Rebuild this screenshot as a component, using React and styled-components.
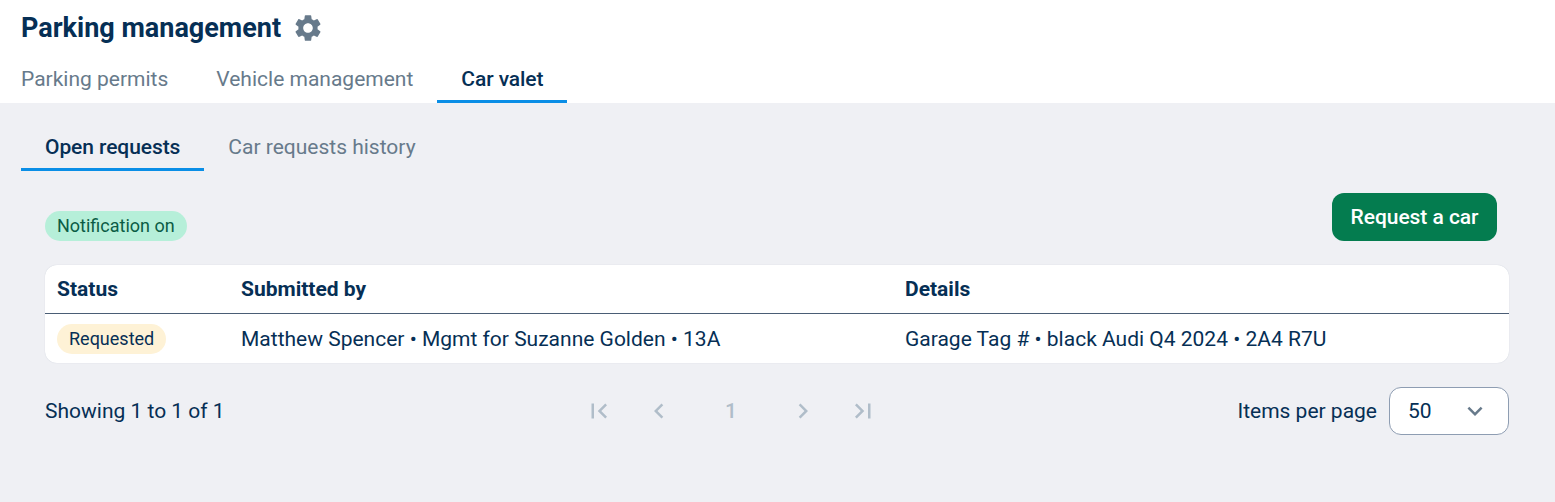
import React from "react";
import styled, { createGlobalStyle } from "styled-components";
import {
  MdSettings,
  MdFirstPage,
  MdLastPage,
  MdChevronLeft,
  MdChevronRight,
  MdExpandMore
} from "react-icons/md";

const navy = "#062f55";
const muted = "#677a8b";
const blue = "#0a8ee6";
const disabled = "#b0bdc9";

const GlobalStyle = createGlobalStyle`
  html, body {
    margin: 0;
    padding: 0;
    height: 100%;
  }
  body {
    font-family: Roboto, "Liberation Sans", sans-serif;
    color: ${navy};
    background: #eff0f4;
  }
  #root {
    height: 100%;
  }
`;

const Page = styled.div`
  display: flex;
  flex-direction: column;
  height: 100%;
  overflow: hidden;
`;

const Header = styled.header`
  background: #fff;
  height: 103px;
  padding-left: 21px;
  display: flex;
  flex-direction: column;
`;

const TitleRow = styled.div`
  height: 56px;
  display: flex;
  align-items: center;
  gap: 11px;
`;

const Title = styled.h1`
  margin: 0;
  font-size: 27px;
  font-weight: 700;
  line-height: 32px;
  color: ${navy};
`;

const SettingsButton = styled.span`
  display: flex;
  color: ${muted};
`;

const Tabs = styled.nav`
  display: flex;
  height: ${({ $height }) => $height}px;
`;

// First top level tab has no left padding, sub tabs keep it
const Tab = styled.div`
  display: flex;
  align-items: center;
  height: 100%;
  box-sizing: border-box;
  padding: ${({ $drop }) => $drop || 0}px 24px 0;
  padding-left: ${({ $flush }) => ($flush ? 0 : "24px")};
  font-size: 21px;
  font-weight: ${({ $active }) => ($active ? 500 : 400)};
  letter-spacing: ${({ $active }) => ($active ? "-0.08px" : 0)};
  color: ${({ $active }) => ($active ? navy : muted)};
  border-bottom: 3px solid ${({ $active }) => ($active ? blue : "transparent")};
`;

const Content = styled.main`
  flex: 1;
  padding: 18px 46px 0 21px;
`;

const Panel = styled.section`
  padding-left: 24px;
`;

const ActionRow = styled.div`
  display: flex;
  justify-content: space-between;
  align-items: flex-end;
  margin-top: 22px;
  padding-right: 12px;
`;

const Pill = styled.span`
  display: inline-flex;
  align-items: center;
  box-sizing: border-box;
  height: 30px;
  padding: 0 12px ${({ $tone }) => ($tone === "green" ? 2 : 0)}px;
  border-radius: 15px;
  font-size: 18px;
  background: ${({ $tone }) => ($tone === "green" ? "#b6efd9" : "#fef2d6")};
  color: ${({ $tone }) => ($tone === "green" ? "#0b5c45" : navy)};
`;

const PrimaryButton = styled.button`
  height: 48px;
  width: 165px;
  padding: 0;
  border: 0;
  border-radius: 12px;
  background: #047c4f;
  color: #fff;
  font-family: inherit;
  font-size: 21px;
  font-weight: 500;
  letter-spacing: -0.05px;
`;

const Table = styled.div`
  margin-top: 24px;
  background: #fff;
  border-radius: 12px;
  overflow: hidden;
  box-shadow: 0 0 1px rgba(11, 45, 78, 0.2);
`;

const Row = styled.div`
  display: grid;
  grid-template-columns: 184px 664px 1fr;
  align-items: center;
  height: ${({ $head }) => ($head ? 48 : 49)}px;
  font-size: 21px;
  font-weight: ${({ $head }) => ($head ? 700 : 400)};
  border-bottom: ${({ $head }) => ($head ? "1px solid #4a5d75" : "0")};
`;

const Cell = styled.div`
  padding-left: 12px;
`;

const Footer = styled.div`
  display: flex;
  justify-content: space-between;
  align-items: center;
  margin-top: 24px;
  font-size: 21px;
`;

const Pager = styled.div`
  display: flex;
  align-items: center;
  color: ${disabled};
`;

const PagerButton = styled.span`
  display: flex;
  align-items: center;
  justify-content: center;
  width: ${({ $wide }) => ($wide ? 84 : 60)}px;
  font-weight: 500;
`;

const PerPage = styled.div`
  display: flex;
  align-items: center;
  gap: 12px;
`;

const Select = styled.div`
  display: flex;
  align-items: center;
  justify-content: space-between;
  box-sizing: border-box;
  width: 120px;
  height: 48px;
  padding: 0 18px;
  border: 1px solid #8e9db2;
  border-radius: 12px;
  background: #fff;
`;

const SelectIcon = styled(MdExpandMore)`
  color: ${muted};
`;

export default function App() {
  return (
    <Page>
      <GlobalStyle />
      <Header>
        <TitleRow>
          <Title>Parking management</Title>
          <SettingsButton>
            <MdSettings size={32} />
          </SettingsButton>
        </TitleRow>
        <Tabs $height={47}>
          <Tab $flush $drop={2}>Parking permits</Tab>
          <Tab $drop={2}>Vehicle management</Tab>
          <Tab $active $drop={2}>Car valet</Tab>
        </Tabs>
      </Header>
      <Content>
        <Tabs $height={50}>
          <Tab $active $drop={5}>Open requests</Tab>
          <Tab $drop={5}>Car requests history</Tab>
        </Tabs>
        <Panel>
          <ActionRow>
            <Pill $tone="green">Notification on</Pill>
            <PrimaryButton>Request a car</PrimaryButton>
          </ActionRow>
          <Table>
            <Row $head>
              <Cell>Status</Cell>
              <Cell>Submitted by</Cell>
              <Cell>Details</Cell>
            </Row>
            <Row>
              <Cell>
                <Pill>Requested</Pill>
              </Cell>
              <Cell>Matthew Spencer • Mgmt for Suzanne Golden • 13A</Cell>
              <Cell>Garage Tag # • black Audi Q4 2024 • 2A4 R7U</Cell>
            </Row>
          </Table>
          <Footer>
            <span>Showing 1 to 1 of 1</span>
            <Pager>
              <PagerButton><MdFirstPage size={30} /></PagerButton>
              <PagerButton><MdChevronLeft size={30} /></PagerButton>
              <PagerButton $wide>1</PagerButton>
              <PagerButton><MdChevronRight size={30} /></PagerButton>
              <PagerButton><MdLastPage size={30} /></PagerButton>
            </Pager>
            <PerPage>
              <span>Items per page</span>
              <Select>
                <span>50</span>
                <SelectIcon size={30} />
              </Select>
            </PerPage>
          </Footer>
        </Panel>
      </Content>
    </Page>
  );
}
